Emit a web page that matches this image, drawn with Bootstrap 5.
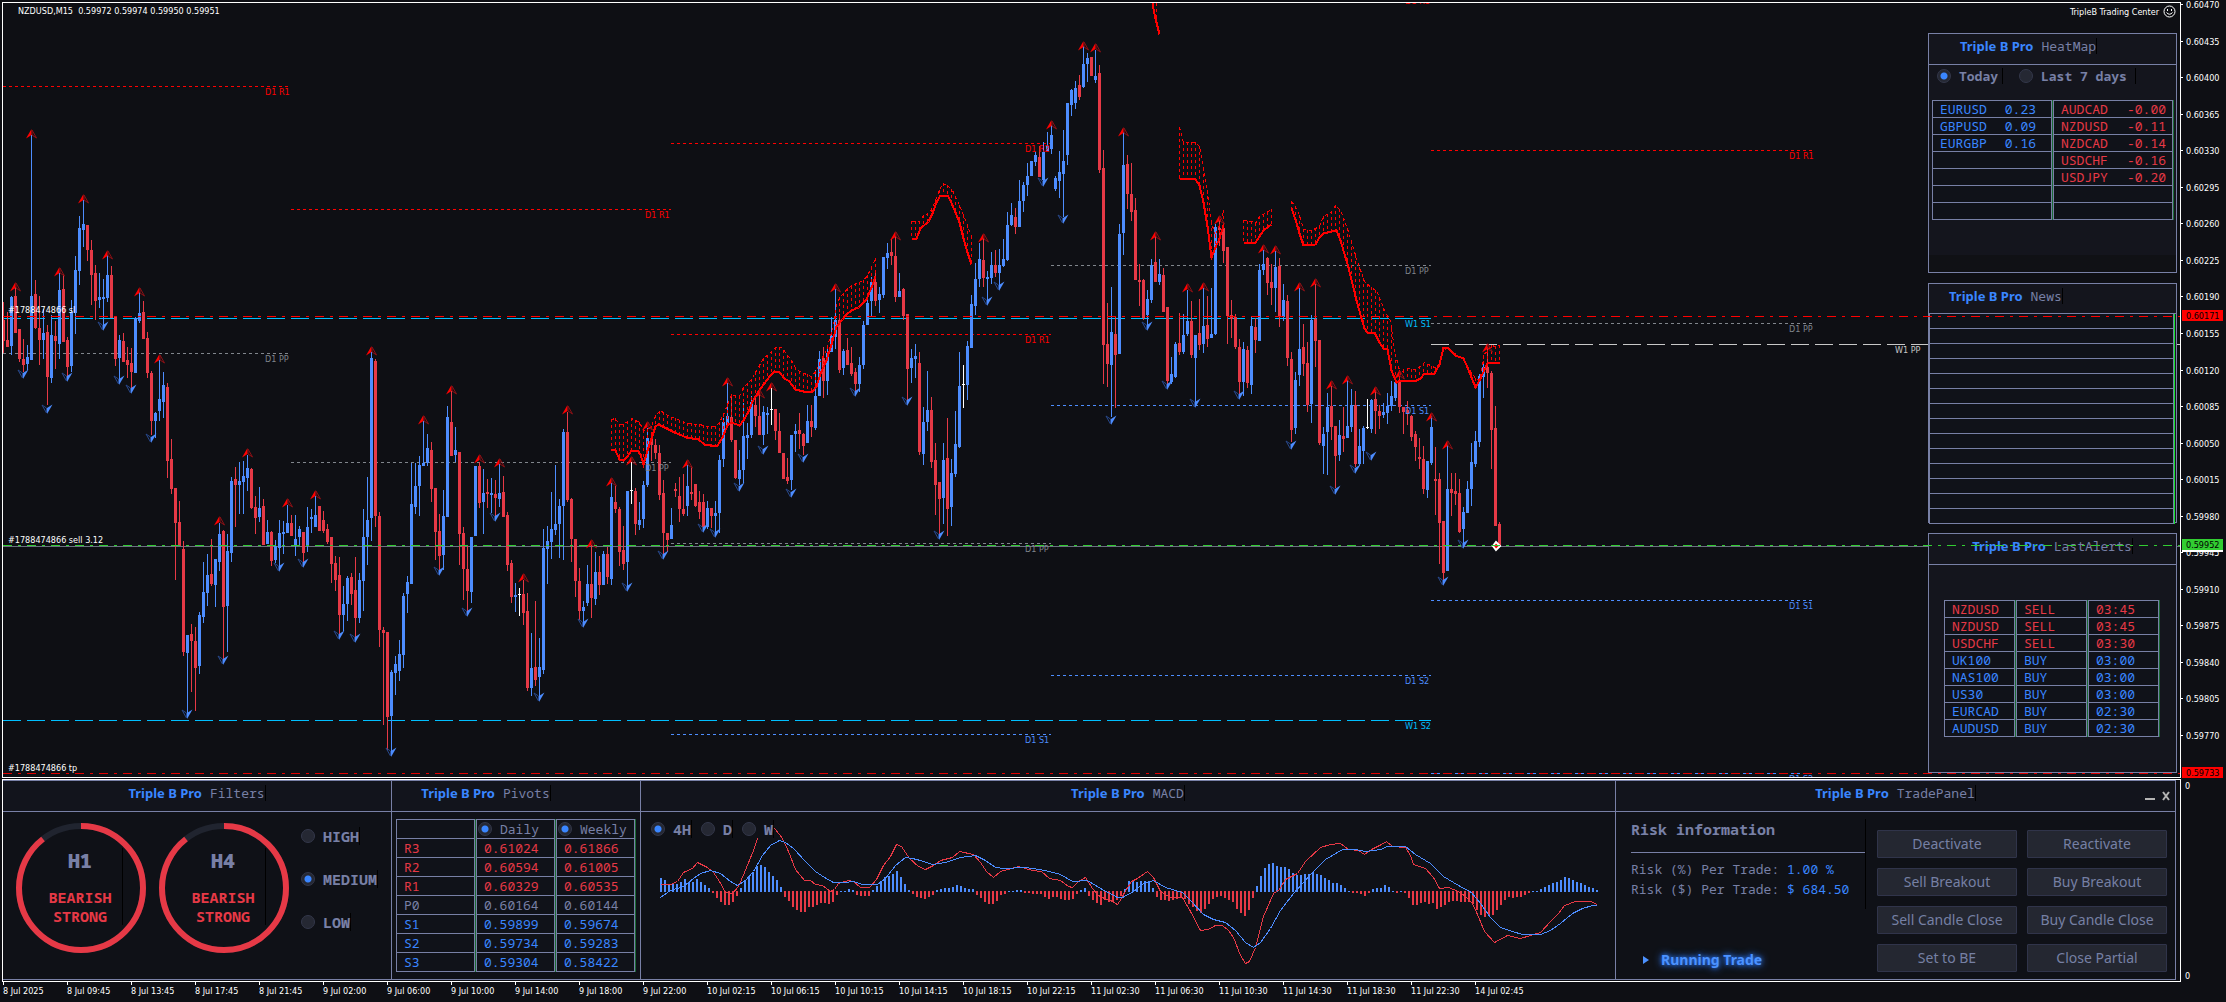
<!DOCTYPE html>
<html lang="en" data-bs-theme="dark">
<head>
<meta charset="utf-8">
<meta name="viewport" content="width=device-width, initial-scale=1">
<title>TripleB Trading Center</title>
<link href="https://cdn.jsdelivr.net/npm/bootstrap@5.3.0/dist/css/bootstrap.min.css" rel="stylesheet">
<style>
:root{--slate:#7880a6;--blue:#3a86ff;--red:#e63946;--ink:#0e0f14;--panel:#14151d;--cell:#101219;--mono:"Noto Sans Mono","DejaVu Sans Mono",monospace;--ui:"Noto Sans",sans-serif;--tiny:"DejaVu Sans Condensed","Noto Sans",sans-serif}
body{background:var(--ink);color:#fff;font-family:var(--ui);font-size:13px;line-height:16px}
.tiny-text{font-family:var(--tiny);font-size:9px;line-height:12px}
.chart-box{border:1px solid #fff;margin:2px 0 0 2px;min-height:776px}
.axis-col{width:45px}
svg text{font-family:var(--tiny);font-size:9px}
.chart-title{top:2px;left:15px;right:4px;color:#fff}
.quote-line{white-space:pre}
.side-stack{top:30px;right:3px;width:249px;gap:10px}
.tool-card{--bs-card-bg:var(--panel);--bs-card-border-color:var(--slate);--bs-card-border-radius:0;--bs-card-inner-border-radius:0;height:240px;font-family:var(--mono)}
.tool-head{height:31px;flex:none;border-bottom:1px solid var(--slate);padding-bottom:6px}
.tool-head.short{height:30px}
.heat-head{padding-right:48px}
.brand{font-family:var(--ui);font-weight:700;color:var(--blue)}
.tool-name{font-family:var(--mono);color:var(--slate);border-right:1px solid #000}
.tone-muted{color:var(--slate)}.tone-up{color:var(--blue)}.tone-down{color:var(--red)}
.dot{appearance:none;flex:none;margin:0;width:14px;height:14px;border-radius:50%;background:#252833;border:1px solid #33374a}
.dot:checked{background:radial-gradient(circle,var(--blue) 3px,#252833 4px)}
.pick{display:flex;align-items:center;color:var(--slate);font-family:var(--mono)}
.pick span{font-weight:700;border-right:1px solid #000}
.big-pick span{font-size:15px;line-height:18px}
.grid-table{border-collapse:separate;border-spacing:0;background:var(--cell);white-space:pre}
.grid-table td,.grid-table th{padding:0 0 0 7px;font-weight:400;border-bottom:1px solid var(--slate);line-height:16px;height:17px}
.grid-table tr:first-child>*{border-top:1px solid var(--slate)}
.heat-picks{padding:3px 8px 0}
.heat-tables{padding:16px 0 0 3px;column-gap:1px}
.rate-table{width:120px;border:solid var(--slate);border-width:0 1px;box-shadow:1px 0 0 #1b6b34}
.rate-table td:last-child{padding:0 6px 0 0;text-align:right}
.rate-table.up td:last-child{padding-right:15px}
.cols-table{border-spacing:1px 0;background:transparent}
.cols-table td,.cols-table th{background:var(--cell);border-left:1px solid var(--slate);border-right:1px solid var(--slate);box-shadow:1px 0 0 #1b6b34}
.alert-table{margin:35px 0 0 14px}
.alert-table td{width:71px}
.news-table{width:246px;border-right:1px solid #13e22b}
.news-table td{height:15px;line-height:12px;border-left:1px solid var(--slate);border-right:1px solid var(--slate)}
.news-table tr:first-child td{border-top:0}
.heat-foot{height:17px;background:#101115}
.dock{border:1px solid #fff;margin:1px 0 0 2px;padding:0 4px 1px 0}
.dock-in{border:1px solid var(--slate);border-width:1px 0 1px 0;background:#12141c}
.dock-pane{border-right:1px solid var(--slate)}
.dock-head{height:31px;border-bottom:1px solid var(--slate);padding-bottom:6px;background:#12141c}
.dock-body{height:167px;background:#0f1117}
.pane-filters{width:389px}.pane-pivots{width:249px}.pane-trade{width:560px}
.pivot-head{padding-right:60px}
.pivot-body{padding:7px 0 0 3px}
.ring-row{padding:11px 0 0 13px;column-gap:12px}
.ring{width:131px;height:131px}
.ring-label{inset:25px 24px 29px 0;border-right:1px solid #000;font-family:var(--mono);font-weight:700;font-size:15px;line-height:19px;padding:1px 0 0 22px}
.ring-label strong{font-size:20px;line-height:24px;margin-bottom:15px}
.power-picks{padding:15px 0 0 11px;row-gap:25px}
.pivot-table{font-family:var(--mono)}
.pivot-table td,.pivot-table th{height:19px;line-height:18px;width:79px}
.pivot-table tr:first-child>*{height:20px}
.pivot-table th+th{padding-left:1px}
.macd-picks{top:8px;left:10px;gap:9px}
.macd-picks span{padding:0 0 0 8px;background:#0f1117}
.trade-info{padding:7px 0 0 15px}
.risk-box{width:235px;border-right:1px solid #000;font-family:var(--mono);height:90px}
.risk-box h2{color:inherit;font-size:15px;line-height:18px;font-weight:700;margin:0 0 8px;padding:1px 0 14px;border-bottom:1px solid var(--slate)}
.running{font-size:14px;font-weight:700;color:#4c92ff;text-shadow:0 0 8px var(--blue),0 0 4px #1a5fe0;padding:43px 0 0 12px;gap:10px}
.btn-trade{--bs-btn-color:#7680a4;--bs-btn-bg:#242731;--bs-btn-border-color:#30344a;--bs-btn-hover-bg:#2c3040;--bs-btn-hover-color:#9aa3c8;--bs-btn-padding-y:0;--bs-btn-padding-x:4px;--bs-btn-border-radius:1px;--bs-btn-font-size:14px;height:28px;line-height:24px;width:140px}
.trade-grid{display:grid;grid-template-columns:140px 140px;align-content:start;gap:10px;padding:18px 8px 0 0}
.win-icons{right:4px;top:10px;gap:6px}
.win-icons button{background:none;border:0;padding:0;color:#b4b4b4;line-height:0}
.zero-axis{padding:2px 0 0 4px}
.time-row{height:20px;padding-left:3px}
.time-cell{width:64px;flex:none;white-space:nowrap;position:relative;padding-top:3px}
.time-cell::before{content:"";display:block;position:absolute;left:0;top:0;width:1px;height:3px;background:#fff}
</style>
<script src="https://cdn.jsdelivr.net/npm/bootstrap@5.3.0/dist/js/bootstrap.bundle.min.js"></script>
</head>
<body class="d-flex flex-column min-vh-100 overflow-hidden">
<main class="d-flex flex-grow-1">
  <section class="chart-box flex-grow-1 position-relative overflow-hidden" aria-label="NZDUSD M15 chart">
    <svg id="chart" class="d-block position-absolute top-0 start-0" width="100%" height="100%"></svg>
    <div class="chart-title position-absolute d-flex justify-content-between tiny-text">
      <span class="quote-line">NZDUSD,M15  0.59972 0.59974 0.59950 0.59951</span>
      <span class="d-flex align-items-center">TripleB Trading Center
        <svg class="ms-1" width="13" height="13" viewBox="0 0 13 13" fill="none" stroke="#fff"><circle cx="6.5" cy="6.5" r="5.5"/><path d="M3.5 7.5Q6.5 11 9.5 7.5"/><path d="M4.500 4v2M8.500 4v2"/></svg></span>
    </div>
    <aside class="side-stack position-absolute d-flex flex-column">
      <div class="card tool-card">
        <div class="tool-head heat-head d-flex justify-content-center align-items-center gap-2"><span class="brand">Triple B Pro</span><span class="tool-name">HeatMap</span></div>
        <div class="flex-grow-1">
          <div class="heat-picks d-flex">
            <label class="pick me-3"><input class="dot me-2" type="radio" name="heat" checked><span class="pe-1">Today</span></label>
            <label class="pick"><input class="dot me-2" type="radio" name="heat"><span class="pe-2">Last 7 days</span></label>
          </div>
          <div class="heat-tables d-flex">
            <table class="grid-table rate-table up tone-up"><tbody id="gain"></tbody></table>
            <table class="grid-table rate-table tone-down"><tbody id="loss"></tbody></table>
          </div>
        </div>
        <div class="heat-foot"></div>
      </div>
      <div class="card tool-card">
        <div class="tool-head short d-flex align-items-center gap-2 ps-3"><span class="brand ms-1">Triple B Pro</span><span class="tool-name">News</span></div>
        <table class="grid-table news-table"><tbody id="news"></tbody></table>
      </div>
      <div class="card tool-card">
        <div class="tool-head d-flex justify-content-center align-items-center gap-2"><span class="brand">Triple B Pro</span><span class="tool-name">LastAlerts</span></div>
        <div class="d-flex">
          <table class="grid-table cols-table alert-table"><tbody id="alerts"></tbody></table>
        </div>
      </div>
    </aside>
    <svg id="orders" class="d-block position-absolute top-0 start-0 pe-none" width="100%" height="100%"></svg>
  </section>
  <svg id="prices" class="axis-col flex-shrink-0" height="778"></svg>
</main>

<section class="d-flex">
  <div class="dock flex-grow-1">
    <div class="dock-in d-flex">
      <div class="dock-pane pane-filters flex-shrink-0">
        <div class="dock-head d-flex justify-content-center align-items-center gap-2"><span class="brand">Triple B Pro</span><span class="tool-name">Filters</span></div>
        <div class="dock-body d-flex">
          <div class="ring-row d-flex">
            <div class="ring position-relative">
              <svg width="131" height="131" viewBox="0 0 131 131" fill="none" stroke-width="6"><circle cx="65" cy="65" r="62" stroke="#20242f"/><circle cx="65" cy="65" r="62" stroke="#e63946" pathLength="100" stroke-dasharray="89.5 100" transform="rotate(-90 65 65)"/></svg>
              <div class="ring-label position-absolute text-center tone-down d-flex flex-column"><strong class="tone-muted">H1</strong><span>BEARISH</span><span>STRONG</span></div>
            </div>
            <div class="ring position-relative">
              <svg width="131" height="131" viewBox="0 0 131 131" fill="none" stroke-width="6"><circle cx="65" cy="65" r="62" stroke="#20242f"/><circle cx="65" cy="65" r="62" stroke="#e63946" pathLength="100" stroke-dasharray="89.5 100" transform="rotate(-90 65 65)"/></svg>
              <div class="ring-label position-absolute text-center tone-down d-flex flex-column"><strong class="tone-muted">H4</strong><span>BEARISH</span><span>STRONG</span></div>
            </div>
          </div>
          <div class="power-picks d-flex flex-column">
            <label class="pick big-pick"><input class="dot me-2" type="radio" name="power"><span>HIGH</span></label>
            <label class="pick big-pick"><input class="dot me-2" type="radio" name="power" checked><span>MEDIUM</span></label>
            <label class="pick big-pick"><input class="dot me-2" type="radio" name="power"><span>LOW</span></label>
          </div>
        </div>
      </div>
      <div class="dock-pane pane-pivots flex-shrink-0">
        <div class="dock-head pivot-head d-flex justify-content-center align-items-center gap-2"><span class="brand">Triple B Pro</span><span class="tool-name">Pivots</span></div>
        <div class="dock-body pivot-body">
          <table class="grid-table cols-table pivot-table"><tbody id="pivots"></tbody></table>
        </div>
      </div>
      <div class="dock-pane flex-grow-1">
        <div class="dock-head d-flex justify-content-center align-items-center gap-2"><span class="brand">Triple B Pro</span><span class="tool-name">MACD</span></div>
        <div class="dock-body position-relative">
          <svg id="macd" class="d-block" width="100%" height="167" viewBox="641 812 974 167" preserveAspectRatio="none"></svg>
          <div class="macd-picks position-absolute d-flex">
            <label class="pick big-pick"><input class="dot" type="radio" name="macd" checked><span>4H</span></label>
            <label class="pick big-pick"><input class="dot" type="radio" name="macd"><span>D</span></label>
            <label class="pick big-pick"><input class="dot" type="radio" name="macd"><span>W</span></label>
          </div>
        </div>
      </div>
      <div class="dock-pane pane-trade flex-shrink-0">
        <div class="dock-head d-flex justify-content-center align-items-center gap-2 position-relative"><span class="brand">Triple B Pro</span><span class="tool-name">TradePanel</span>
          <div class="win-icons position-absolute d-flex">
            <button type="button" aria-label="Minimise"><svg width="10" height="10" stroke="currentColor" stroke-width="2"><path d="M0 8h10"/></svg></button>
            <button type="button" aria-label="Close"><svg width="10" height="10" stroke="currentColor" stroke-width="2"><path d="M2 1l6 8M8 1l-6 8"/></svg></button>
          </div>
        </div>
        <div class="dock-body d-flex justify-content-between">
          <div class="trade-info tone-muted">
            <div class="risk-box">
              <h2>Risk information</h2>
              <div>Risk (%) Per Trade: <span class="tone-up">1.00 %</span></div>
              <div class="mt-1">Risk ($) Per Trade: <span class="tone-up">$ 684.50</span></div>
            </div>
            <div class="running d-flex align-items-center"><svg width="8" height="10" fill="#4c92ff"><path d="M0 1l6 4-6 4z"/></svg><span>Running Trade</span></div>
          </div>
          <div class="trade-grid">
            <button class="btn btn-trade">Deactivate</button><button class="btn btn-trade">Reactivate</button>
            <button class="btn btn-trade">Sell Breakout</button><button class="btn btn-trade">Buy Breakout</button>
            <button class="btn btn-trade text-nowrap">Sell Candle Close</button><button class="btn btn-trade text-nowrap">Buy Candle Close</button>
            <button class="btn btn-trade">Set to BE</button><button class="btn btn-trade">Close Partial</button>
          </div>
        </div>
      </div>
    </div>
  </div>
  <div class="axis-col zero-axis flex-shrink-0 d-flex flex-column justify-content-between tiny-text"><span>0</span><span>0</span></div>
</section>
<div id="times" class="time-row d-flex tiny-text overflow-hidden"></div>

<script>
// Candles: colour, high, body top, body bottom, low (one per 4px step)
const candles = `r302,320,341,353 r312,340,347,347 b296,297,346,355 r287,296,333,333 r329,329,359,362 r339,359,365,372 b345,357,364,370 b135,296,360,360 r280,294,328,329 r296,328,340,365
b309,333,340,359 r325,332,377,405 b315,335,378,383 r321,336,341,369 b273,290,344,359 r274,289,342,342 r337,340,367,376 b300,312,366,372 b256,270,313,334 b216,228,271,285
b200,224,230,247 r225,225,250,261 r240,250,275,305 r265,273,301,320 b273,297,300,308 b279,297,299,325 b255,275,298,302 r266,275,318,318 r316,316,359,366 b335,340,358,379
r333,341,362,362 r347,360,365,378 r348,363,372,389 b317,318,373,373 b292,313,321,323 r301,312,339,339 r332,338,373,378 r371,373,421,435 b412,413,421,438 b360,399,411,421
b372,385,402,418 r383,387,461,478 r439,459,489,494 r488,488,523,580 r501,522,546,546 r541,549,652,656 b635,635,653,714 r624,634,641,692 r627,641,668,711 b612,615,666,674
b562,592,617,623 b554,575,593,606 r539,574,584,586 b559,559,585,607 b523,534,562,571 r530,531,607,660 b534,551,606,652 b477,481,553,562 r467,479,485,527 b462,481,485,514
b461,476,482,514 b455,468,478,491 r468,469,508,509 r496,507,518,534 b487,508,517,522 r499,506,545,545 b520,532,544,544 r531,532,561,566 b540,546,560,563 b520,533,548,566
b521,532,534,554 b505,523,533,533 r515,523,536,536 b515,539,546,556 b526,529,537,546 r532,532,553,562 b507,527,546,552 b509,517,519,533 b496,515,527,527 r506,506,531,531
r511,520,531,533 r524,529,542,544 r537,537,564,583 r556,563,580,591 r557,575,615,636 b586,604,615,631 b576,578,604,621 r573,577,594,605 r557,590,618,638 b573,580,618,623
b509,537,581,611 b477,520,537,565 b352,358,518,541 r359,361,516,527 r512,516,630,647 r627,630,633,725 r632,632,717,750 b670,672,716,752 b656,664,673,695 b640,654,671,681
b593,596,655,668 b576,582,594,613 b463,504,584,584 b463,486,507,514 b456,465,486,516 b421,463,466,466 b434,448,463,466 r442,450,489,502 r488,488,532,560 r514,531,556,572
b490,516,555,570 b406,417,517,517 r391,422,456,456 b427,450,455,462 r452,452,534,565 r527,533,569,600 r546,569,591,612 b537,537,592,603 b466,466,536,536 r462,466,503,508
b469,493,502,534 r479,492,494,508 b478,493,495,513 r480,494,498,516 b464,493,499,507 r476,492,517,517 r512,515,565,571 r560,563,597,603 b583,595,597,612 w588,594,595,616
r580,594,613,625 r593,611,688,691 b633,668,688,696 r601,667,680,686 b638,667,677,696 b529,548,670,674 b526,541,549,584 b492,529,542,559 b465,524,530,535 b499,506,524,558
b429,432,506,560 r412,432,500,502 r498,499,539,562 r539,539,581,597 r568,581,611,620 b601,607,611,622 b565,584,603,606 r545,584,598,618 b552,572,599,605 r556,572,585,595
b551,554,585,585 r547,554,577,584 b483,497,579,585 r486,502,509,513 r507,509,552,566 r526,550,564,570 b491,491,562,588 w462,490,491,504 r488,491,524,535 b502,520,525,530
b481,485,519,528 b428,438,485,487 r434,439,445,461 r439,445,453,459 r445,453,495,500 r480,493,533,555 r533,533,540,552 b508,525,539,539 r483,489,491,497 r477,496,509,522
r474,509,514,516 b465,486,506,516 r466,492,494,500 r484,484,506,507 r491,502,512,519 r494,502,529,530 b501,508,527,529 r508,508,516,528 b501,513,516,536 b455,460,513,533
b418,422,459,467 b383,416,425,425 r394,417,440,442 r440,440,478,479 b450,470,479,485 b403,436,470,483 b423,435,438,459 b396,402,435,438 r395,405,416,427 r392,416,435,435
b406,412,435,445 b407,413,415,434 w388,409,410,425 r409,409,431,440 r413,431,453,453 r453,453,479,479 r458,477,481,484 b435,435,480,490 b424,431,434,452 r413,430,434,449
r433,434,446,455 b405,421,443,443 r405,421,427,437 b370,396,428,430 b351,359,396,396 r347,358,381,398 b345,353,381,395 b317,336,352,352 b289,320,337,349 r314,320,370,373
b349,351,368,375 r338,350,365,365 r347,363,374,376 r368,372,384,391 b357,365,384,392 b321,325,365,369 b297,303,325,325 b277,282,301,316 r273,282,301,306 b287,294,300,313
b257,257,295,298 b243,253,258,269 r239,252,256,265 r236,256,297,302 b273,291,297,297 r288,289,316,320 r314,314,369,400 b349,358,368,383 b344,356,359,378 r352,363,452,455
b407,422,454,465 b371,410,422,431 r397,410,462,468 r443,460,485,515 r482,482,499,534 b443,460,498,524 r418,458,509,536 b459,473,507,526 b411,444,474,477 b352,386,447,448
w365,384,385,408 b341,346,385,400 b295,304,348,348 b263,279,306,315 b243,259,279,287 r238,260,278,287 b271,277,279,300 b252,265,278,284 r250,265,273,277 b249,265,273,285
b239,259,266,267 b212,225,260,261 b203,215,225,226 r208,217,227,234 b180,201,227,227 b182,185,201,212 b163,176,185,196 b161,161,176,176 b152,155,162,166 r146,157,177,177
b142,152,180,184 b132,146,151,151 b125,135,149,154 b176,178,189,191 b151,172,181,198 b130,161,174,217 b103,103,155,165 b89,90,105,116 b81,88,103,109 r75,85,97,100
b46,64,87,88 b53,58,64,82 r57,57,76,76 b50,76,80,83 r65,73,170,173 r150,168,345,384 r303,344,364,387 b287,332,365,417 r317,334,355,408 b224,234,354,354
b132,165,233,255 r155,164,194,209 r163,194,212,221 r198,210,280,280 r264,280,282,306 r279,280,318,320 b290,299,315,325 b259,265,300,303 r236,262,282,282 b259,274,282,285
r268,275,312,312 r307,307,381,386 b357,374,382,384 b342,344,377,378 r313,343,352,355 b314,335,352,354 b290,321,334,336 r301,321,355,358 b335,335,358,404 r299,333,345,350
b288,326,344,353 r296,325,339,347 b288,334,338,338 b224,227,334,335 r220,228,230,246 r224,228,251,263 r247,247,316,344 r300,315,319,338 r314,317,347,349 r339,347,382,395
b342,349,382,396 r346,350,383,388 b317,326,385,394 r318,327,340,353 b264,270,341,341 b250,264,270,275 r257,258,283,295 r264,282,288,305 b251,267,288,312 r258,266,317,327
b284,300,317,321 r295,301,358,366 r352,359,430,442 b372,380,428,434 b288,349,375,386 r324,347,364,376 r342,363,405,412 b315,320,404,423 r284,319,341,367 r340,340,443,445
b427,434,446,474 b393,407,432,475 r386,406,427,440 r426,426,456,488 b420,435,455,461 r407,436,439,452 b380,426,438,438 b389,405,427,432 r391,405,464,467 b429,446,464,466
b426,428,451,464 w399,427,428,429 b399,400,429,433 r390,399,411,434 r405,411,416,429 b403,412,415,418 b393,406,413,424 b381,396,406,411 b381,382,398,401 r376,381,407,413
r407,407,412,434 r401,410,414,425 r415,416,437,441 r431,434,447,461 r438,457,459,469 r446,459,489,494 b461,461,490,498 b416,427,463,465 r447,479,481,515 r473,479,523,564
r521,521,573,580 b445,489,571,571 r473,489,493,516 r473,491,494,505 r479,493,532,533 b507,512,529,545 b481,489,513,513 b443,462,489,506 b431,441,464,467 b374,376,442,447
b363,367,377,398 r347,367,373,388 r371,373,430,469 r406,428,526,526 r522,524,546,546`.split(/\s+/).map(s => [s[0], ...s.slice(1).split(',').map(Number)]);

// Fractal arrows: candle index : tip height
const pairs = s => s.split(' ').map(p => p.split(':').map(Number));
const ups = pairs('3:282 7:129 14:267 20:194 26:250 34:287 39:354 54:516 61:448 71:498 78:490 92:346 105:415 112:385 119:454 124:458 130:573 141:405 147:539 152:477 157:456 161:421 171:459 181:377 189:389 192:382 208:283 223:231 245:233 262:120 270:41 273:43 280:127 288:231 296:283 300:282 304:215 315:244 318:245 324:282 328:278 332:380 336:375 343:386 349:370 357:412 361:440 371:343');
const downs = pairs('5:379 11:414 16:382 25:331 29:385 32:394 37:443 46:719 55:665 69:572 75:568 84:640 88:643 97:757 109:576 116:617 123:522 134:702 145:628 156:592 165:560 175:533 178:538 184:492 190:455 197:498 200:463 213:397 226:406 234:540 246:306 249:291 260:187 265:224 277:425 286:331 291:390 298:408 309:400 322:450 333:495 338:474 342:461 360:586 365:549');

// Trend bands: lower edge, upper edge
const bands = [
 ['611:449 615:450 619:459 623:460 627:456 631:450 637:450 640:454 643:464 647:450 651:438 655:426 658:424 666:428 674:432 686:437 698:439 704:444 710:445 717:445 722:437 727:425 731:422 739:425 743:420 748:411 752:401 758:391 764:383 769:376 774:371 779:372 784:378 789:381 795:389 803:391 812:391 816:386 820:373 826:360 831:344 836:326 842:319 846:314 851:310 858:307 866:299 871:287 875:276',
  '611:419 615:418 619:424 623:424 627:421 631:418 639:422 643:430 647:429 651:426 655:415 660:410 667:415 675:418 687:423 699:424 707:426 716:426 720:420 724:412 731:394 739:396 743:387 751:379 763:358 771:351 775:347 781:347 785:352 791:360 795:367 799:371 811:376 816:370 821:358 826:350 831:332 836:305 839:297 843:293 847:288 855:283 863:280 867:275 871:267 875:258'],
 ['911:238 916:238 920:228 928:221 932:213 936:202 940:195 947:195 950:200 955:212 959:222 963:238 967:252 971:264', '911:221 919:221 923:215 928:213 932:207 936:197 940:187 943:183 948:186 952:190 960:207 967:225 971:236'],
 ['1152:3 1155:18 1159:34', '1152:-12 1159:-6'],
 ['1179:178 1195:179 1199:185 1203:202 1207:226 1211:257 1215:247 1219:238 1223:225', '1179:127 1183:142 1195:142 1199:146 1203:168 1207:190 1211:222 1215:235 1219:224 1223:210'],
 ['1243:242 1255:242 1259:236 1263:230 1271:224', '1243:220 1251:221 1255:223 1259:216 1263:214 1271:209'],
 ['1291:208 1295:219 1299:233 1303:245 1315:244 1319:237 1323:233 1331:231 1336:230 1340:240 1348:267 1356:300 1361:318 1364:328 1367:332 1374:332 1379:342 1383:348 1387:349 1391:370 1396:382 1400:380 1416:380 1420:378 1424:373 1434:373 1439:364 1443:347 1447:347 1455:355 1463:358 1467:367 1475:387 1479:380 1487:363 1491:362 1499:362',
  '1291:201 1295:206 1299:215 1303:229 1311:230 1319:226 1323:216 1331:211 1335:205 1340:210 1344:220 1348:231 1356:258 1364:281 1372:288 1376:290 1384:310 1390:320 1394:350 1400:374 1404:368 1416:369 1424:362 1436:368 1440:360 1443:351 1447:347 1463:360 1475:378 1479:380 1483:355 1491:345 1495:346 1499:345']
];
// Pivot levels: start, end, y, colour, label, style
const R = '#f00', G = '#80858c', B = '#4d8dff', C = '#00bfff', W = '#c8c8c8';
const levels = [
 [3,288,86,R,'D1 R1'],[3,288,353,G,'D1 PP'],[291,671,209,R,'D1 R1'],[291,671,462,G,'D1 PP'],
 [671,1051,143,R,'D1 R2'],[671,1051,334,R,'D1 R1'],[671,1051,543,G,'D1 PP'],[671,1051,734,B,'D1 S1'],
 [1051,1431,-5,R,'D1 R1'],[1051,1431,265,G,'D1 PP'],[1051,1431,405,B,'D1 S1'],[1051,1431,675,B,'D1 S2'],
 [1431,1815,150,R,'D1 R1'],[1431,1815,323,G,'D1 PP'],[1431,1815,600,B,'D1 S1'],[1431,1815,773,B,'D1 S2'],
 [3,1431,318,C,'W1 S1','18 6'],[3,1431,720,C,'W1 S2','18 6'],[1431,2200,344,W,'W1 PP','18 6']];

const line = (x1, x2, y, c, dash) => `<line x1="${x1}" x2="${x2}" y1="${y + .5}" y2="${y + .5}" stroke="${c}" ${dash ? `stroke-dasharray="${dash}"` : ''}/>`;
const rect = (x, y, w, h, c) => `<rect x="${x}" y="${y}" width="${w}" height="${h}" fill="${c}"/>`;
const at = (pts, x) => { for (let k = 1; k < pts.length; k++) if (x <= pts[k][0]) { const [a, b] = pts[k - 1], [c, d] = pts[k]; return b + (d - b) * (x - a) / (c - a); } return pts.at(-1)[1]; };
const poly = (pts, c, w, extra = '') => `<polyline points="${pts.map(p => (p[0] + .5) + ',' + (p[1] + .5)).join(' ')}" fill="none" stroke="${c}" stroke-width="${w}" ${extra}/>`;
const fill = { r: '#e63946', b: '#4d8dff', w: '#ffffff' };

let out = '<g transform="translate(-3 -3)" shape-rendering="crispEdges">' + line(3, 2200, 546, '#6a7280');
out += levels.map(l => line(l[0], l[1], l[2], l[3], l[5] || '3 3')).join('');
candles.forEach(([c, h, t, b, l], i) => { const x = 3 + 4 * i; out += rect(x, h, 1, Math.max(l - h, 1), fill[c]) + rect(x - 1, t, 3, Math.max(b - t, 1), fill[c]); });
bands.map(b => b.map(pairs)).forEach(([lo, up]) => {
  for (let x = lo[0][0]; x <= lo.at(-1)[0]; x += 4) out += `<line x1="${x + .5}" x2="${x + .5}" y1="${at(up, x)}" y2="${at(lo, x)}" stroke="#f00" stroke-dasharray="3 3"/>`;
  out += poly(up, '#f00', 1, 'stroke-dasharray="3 3"') + poly(lo, '#f00', 2);
});
out += '</g><g transform="translate(-3 -3)">';
ups.forEach(([i, y]) => out += `<g transform="translate(${3.5 + 4 * i} ${y})"><path d="M0 0L-5.500 9.500 0 6z" fill="#f00"/><path d="M.5 1L5 9 .5 6z" fill="none" stroke="#8c1014"/></g>`);
downs.forEach(([i, y]) => out += `<g transform="translate(${3 + 4 * i} ${y})"><path d="M0 0L5.500-9.500 0-6z" fill="#4d8dff"/><path d="M-.5-1L-5-9-.5-6z" fill="none" stroke="#27488c"/></g>`);
levels.forEach(l => { const x = l[4] === 'W1 PP' ? 1895 : l[1] === 288 ? 265 : l[1] - 26; out += `<text x="${x}" y="${l[2] + 9}" fill="${l[3]}">${l[4]}</text>`; });
out += '<path d="M1496 542l4 4-4 4-3-4z" fill="#f00" stroke="#fff" stroke-width="2"/></g>';
chart.innerHTML = out;

orders.innerHTML = '<g transform="translate(-3 -3)">' + line(3, 2200, 316, '#f00', '9 6 3 6') + line(3, 2200, 545, '#32cd32', '9 6 3 6') + line(3, 2200, 773, '#e00000', '9 6 3 6')
 + [['sl', 313], ['sell 3.12', 543], ['tp', 771]].map(([t, y]) => `<text x="8" y="${y}" fill="#fff">#1788474866 ${t}</text>`).join('') + '</g>';

let ax = '';
for (let n = 0; n < 21; n++) { const y = Math.round(4 + 36.55 * n); ax += rect(0, y, 2, 1, '#fff') + `<text x="5" y="${y + 4}" fill="#fff">${(0.6047 - n * 0.00035).toFixed(5)}</text>`; }
[[310, '#f00', '0.60171'], [539, '#32cd32', '0.59952'], [767, '#f00', '0.59733']].forEach(([y, c, t]) => { if (y === 539) ax += rect(1, 550, 41, 2, '#fff'); ax += rect(1, y, 41, 11, c) + `<text x="5" y="${y + 9}" fill="#000">${t}</text>`; });
prices.innerHTML = ax;

// MACD histogram: positive up, negative down
const hist = [14,12,8,8,8,10,13,10,10,13,10,7,4,-2,-7,-11,-14,-14,-11,-5,4,12,16,20,26,27,25,20,16,12,5,-6,-10,-16,-19,-21,-21,-16,-16,-14,-12,-12,-13,-11,-4,1,1,3,2,-4,-5,-5,-5,2,6,11,15,16,18,21,15,8,2,-3,-6,-7,-8,-6,-4,2,3,4,4,5,7,6,4,3,3,-4,-7,-11,-13,-13,-10,-4,-3,1,1,2,2,-2,-2,-3,-3,-3,-6,-8,-6,-6,-8,-9,-9,-8,-3,2,4,-5,-9,-12,-14,-9,-11,-11,-9,-5,3,11,11,10,11,11,11,4,
-6,-9,-9,-10,-9,-8,-7,-8,-13,-16,-20,-22,-18,-13,-8,-6,-5,-7,-9,-11,-18,-22,-25,-19,-7,6,16,24,28,29,26,25,25,23,19,17,17,18,18,20,18,17,14,12,9,9,7,4,1,-2,-2,-3,-5,-2,3,4,4,7,5,1,-2,1,-2,-7,-14,-14,-12,-11,-13,-12,-18,-16,-14,-11,-10,-10,-11,-11,-11,-13,-19,-24,-26,-25,-24,-19,-14,-9,-6,-7,-6,-6,-4,-2,1,1,3,5,7,9,10,12,15,14,12,10,9,7,5,4,2];
const macdLine = pairs('660:884 670:884 677:881 683:872 692:868 697:862 707:867 713:872 719:881 725:892 732:893 738:886 744:872 753:850 757:838 764:828 770:823 775:829 782:838 788:851 795:869 804:880 810:880 815:884 822:885 830:891 834:889 838:883 848:880 853:881 860:887 869:887 876:879 883:865 890:856 896:844 901:846 909:858 918:866 925:869 933:865 940:860 952:857 959:851 973:854 980:862 986:871 993:877 1000:871 1018:866 1032:870 1041:871 1049:878 1060:880 1068:886 1072:887 1078:881 1085:877 1092:888 1098:895 1104:898 1110:900 1117:904 1121:898 1124:892 1131:881 1137:878 1147:871 1153:877 1160:891 1170:897 1182:897 1190:911 1200:930 1208:929 1215:925 1222:925 1228:930 1233:937 1240:955 1245:963 1249:961 1255:947 1263:916 1273:893 1279:889 1285:879 1297:873 1305:861 1320:847 1330:844 1340:843 1348:849 1358:850 1364:854 1371:849 1381:844 1386:841 1392:846 1405:847 1410:855 1413:864 1425:868 1433:877 1439:888 1448:887 1458:891 1465:896 1472:903 1477:914 1484:931 1494:942 1507:935 1520:938 1530:935 1540:932 1550:921 1558:913 1564:905 1575:901 1590:901 1597:904');
const signalLine = pairs('660:897 670:890 683:886 693:878 700:873 710:870 720:873 730:881 737:885 745:880 753:871 762:855 770:845 779:840 785:842 793:848 805:861 815:871 824:877 833:882 845:882 853:881 862:884 877:884 885:878 895:865 905:857 912:858 920:860 932:864 945:862 960:857 975:855 985:860 995:867 1003:868 1025:867 1045:870 1060:874 1072:881 1087:880 1100:888 1117:897 1122:897 1133:891 1143:883 1153:880 1165:887 1182:892 1190:900 1203:914 1213:919 1225:922 1235:930 1245:942 1253:947 1260:942 1270:928 1280:910 1293:893 1310:874 1325:859 1342:849 1355:849 1365:851 1380:849 1387:846 1405:846 1415:854 1430:863 1443:876 1458:885 1471:892 1480:903 1490:917 1500:927 1512:931 1522:934 1540:934 1550:930 1560:923 1572:913 1582:908 1592:905 1596:905');
macd.innerHTML = '<g shape-rendering="crispEdges">' + hist.map((v, k) => v > 0 ? rect(660 + 4 * k, 892 - v, 2, v, '#4d8dff') : rect(660 + 4 * k, 891, 2, -v, '#e63946')).join('') + poly(macdLine, '#e63946', 1) + poly(signalLine, '#4d8dff', 1) + '</g>';

const rates = (el, rows) => el.innerHTML = [...rows, ...Array(7 - rows.length).fill(['', ''])].map(r => `<tr><td>${r[0]}</td><td>${r[1]}</td></tr>`).join('');
rates(gain, [['EURUSD', '0.23'], ['GBPUSD', '0.09'], ['EURGBP', '0.16']]);
rates(loss, [['AUDCAD', '-0.00'], ['NZDUSD', '-0.11'], ['NZDCAD', '-0.14'], ['USDCHF', '-0.16'], ['USDJPY', '-0.20']]);
news.innerHTML = '<tr><td></td></tr>'.repeat(14);
alerts.innerHTML = ['NZDUSD SELL 03:45', 'NZDUSD SELL 03:45', 'USDCHF SELL 03:30', 'UK100 BUY 03:00', 'NAS100 BUY 03:00', 'US30 BUY 03:00', 'EURCAD BUY 02:30', 'AUDUSD BUY 02:30']
 .map(s => s.split(' ')).map(c => `<tr class="${c[1] === 'SELL' ? 'tone-down' : 'tone-up'}">${c.map(t => `<td>${t}</td>`).join('')}</tr>`).join('');
const head = n => `<th><label class="pick"><input class="dot me-2" type="checkbox" checked>${n}</label></th>`;
pivots.innerHTML = `<tr class="tone-muted"><th></th>${head('Daily')}${head('Weekly')}</tr>` + ['R3 0.61024 0.61866', 'R2 0.60594 0.61005', 'R1 0.60329 0.60535', 'P0 0.60164 0.60144', 'S1 0.59899 0.59674', 'S2 0.59734 0.59283', 'S3 0.59304 0.58422']
 .map(s => `<tr class="tone-${{ R: 'down', P: 'muted', S: 'up' }[s[0]]}">${s.split(' ').map(t => `<td>${t}</td>`).join('')}</tr>`).join('');
times.innerHTML = ['8 Jul 2025', '8 Jul 09:45', '8 Jul 13:45', '8 Jul 17:45', '8 Jul 21:45', '9 Jul 02:00', '9 Jul 06:00', '9 Jul 10:00', '9 Jul 14:00', '9 Jul 18:00', '9 Jul 22:00', '10 Jul 02:15', '10 Jul 06:15', '10 Jul 10:15', '10 Jul 14:15', '10 Jul 18:15', '10 Jul 22:15', '11 Jul 02:30', '11 Jul 06:30', '11 Jul 10:30', '11 Jul 14:30', '11 Jul 18:30', '11 Jul 22:30', '14 Jul 02:45'].map(t => `<div class="time-cell">${t}</div>`).join('');
</script>
</body>
</html>
